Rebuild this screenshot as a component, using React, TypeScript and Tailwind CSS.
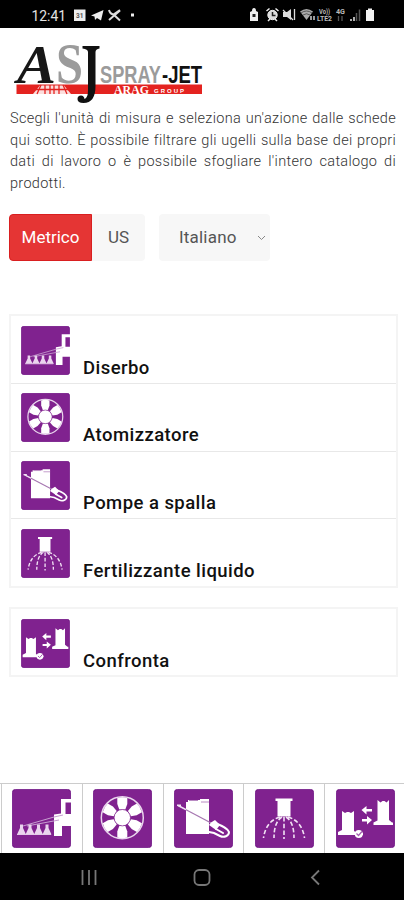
import React from 'react';

type IconName = 'weeding' | 'fan' | 'knapsack' | 'fertilizer' | 'compare';

function ToolIcon({ name, className }: { name: IconName; className: string }) {
  return (
    <svg className={`block shrink-0 ${className}`} viewBox="0 0 59 59" fill="none">
      <rect x="0.4" y="0.4" width="58.2" height="58.2" rx="3" fill="#80228f" stroke="#6a0d80" strokeWidth="0.8" />
      {name === 'weeding' && (
        <>
          <path d="M49 10h10v3.500h-5.500V25H59v12H50v10h-8V25.500l7-1z" fill="#fff" />
          <path d="M11 37l31-9 9-2M15 37l32-6" stroke="#c79fd0" strokeWidth="1" />
          {[9.5, 18, 26.5, 35].map((x) => (
            <path key={x} transform={`translate(${x} 0)`} d="M-1.500 35.500h3v3.500L4.500 45.500h-9l3-6.500z" fill="#ead5ee" />
          ))}
          <path d="M5 45.500h34" stroke="#e4cbe9" />
        </>
      )}
      {name === 'fan' && (
        <>
          <circle cx="29.300" cy="28.700" r="21" stroke="#e9d6ed" strokeWidth="1.500" />
          {[0, 60, 120, 180, 240, 300].map((angle) => (
            <path
              key={angle}
              transform={`rotate(${angle} 29.3 28.7)`}
              d="M24.300 9q5-1.500 10 0v6l-2 5.500h-6l-2-5.500z"
              fill="#fff"
            />
          ))}
          <circle cx="29.300" cy="28.700" r="8.200" fill="#fff" stroke="#80228f" strokeWidth="0.700" />
        </>
      )}
      {name === 'knapsack' && (
        <>
          <path d="M12 13h2v-2h12v-1h9v35H12z" fill="#fff" />
          <path d="M15 11.500h9M27 13h8" stroke="#b98ac3" strokeWidth="1" />
          <path d="M4 16.500L39 35" stroke="#a677b1" strokeWidth="1.300" />
          <path d="M3 16.300h4M4 16.500L12 20.600" stroke="#f1e2f4" strokeWidth="1.500" />
          <path d="M37 33.500l4-2.500 5 5-4 5-7-5z" fill="#fff" />
          <path d="M41 34q13 5 14 9c0 4-5 6-9 4l-6-3-5-1M42 40l7 4" stroke="#fff" strokeWidth="2" strokeLinecap="round" />
        </>
      )}
      {name === 'fertilizer' && (
        <>
          <path d="M20.500 9.500H37.500V12H35.500V27.500H22.500V12H20.500z" fill="#fff" />
          <path
            d="M25 28Q11 32 8.500 49M27 28Q19 33 19 49M29 28V50M31 28Q39 33 39 49M33 28Q47 32 49.500 49"
            stroke="#f1e2f4"
            strokeWidth="1.600"
            strokeDasharray="4.500 2.200"
          />
        </>
      )}
      {name === 'compare' && (
        <>
          <path d="M6 22l3 2 2-1h2l2 1 3-2v20l3 2h6v2H2v-3l4-2z" fill="#fff" />
          <circle cx="22.800" cy="45" r="4" fill="#fff" />
          <path d="M20.500 44.500l2 2 3.500-4" stroke="#a45eb0" strokeWidth="1.200" />
          <path d="M41.500 11l3 2.500 2-1.500h2l2 1.500 2.500-2.500v20l3 2.500h1V36H37.500v-2.500l4-2z" fill="#fff" />
          <path d="M25.500 21l5-4v3H36v2.500h-5.500v3zM36 31l-5-4v3h-5v2.500h5v3z" fill="#fff" />
        </>
      )}
    </svg>
  );
}

const sections: { icon: IconName; label: string }[] = [
  { icon: 'weeding', label: 'Diserbo' },
  { icon: 'fan', label: 'Atomizzatore' },
  { icon: 'knapsack', label: 'Pompe a spalla' },
  { icon: 'fertilizer', label: 'Fertilizzante liquido' },
];

const tabs: IconName[] = ['weeding', 'fan', 'knapsack', 'fertilizer', 'compare'];

function StatusBar() {
  return (
    <div className="h-[28px] bg-black">
      <svg className="block" width="404" height="28" viewBox="0 0 404 28" fill="none">
        <text x="31.500" y="20.500" fill="#e4e4e4" fontFamily="Roboto, sans-serif" fontSize="15.500" textLength="34.500" lengthAdjust="spacingAndGlyphs">12:41</text>
        <path d="M74 9.500h11.500v11.500H74z" fill="#eee" />
        <text x="76" y="18" fill="#555" fontFamily="Roboto, sans-serif" fontSize="6.500" fontWeight="700">31</text>
        <path d="M91 15.500l12.500-5.500-2.500 10.500-4-2.500-2 2-.5-3.500z" fill="#eee" />
        <path d="M109 10q1 4 4.500 4.500L120 10M109 20l11-9.500M113 14l7 6.500" stroke="#ddd" strokeWidth="2" />
        <rect x="131" y="13.500" width="3" height="3" fill="#eee" />
        <path d="M252 12l2-1q0-3 2-3t2 3l2 1v9h-8z" transform="translate(-2 0)" fill="#eee" />
        <path d="M252.500 14h3v3h-3z" fill="#222" />
        <circle cx="272.500" cy="15" r="4.700" fill="#ddd" stroke="#eee" />
        <path d="M266.500 11l3-2.500M278.500 11l-3-2.500M268 21l2-2M277 21l-2-2" stroke="#eee" strokeWidth="1.500" />
        <path d="M272.500 12v3.500h3" stroke="#222" strokeWidth="1.500" />
        <path d="M283 12h4l4-3v11l-4-3h-4z" fill="#ddd" />
        <path d="M283 10l10 10M294.500 9v11" stroke="#ddd" strokeWidth="1.300" />
        <path d="M300 11.500q6.500-5 13 0L306.500 20z" fill="#aaa" />
        <path d="M301 13q5.500-4 11 0M303 15q3.500-2.500 7 0" stroke="#333" strokeWidth="0.700" />
        <path d="M311 20v-4M314 16v4" stroke="#ddd" strokeWidth="1.400" />
        <g fill="#bbb" fontFamily="Roboto, sans-serif" fontWeight="700">
          <text x="319" y="14" fontSize="6.500" textLength="11" lengthAdjust="spacingAndGlyphs">Vo))</text>
          <text x="317" y="21" fontSize="7" textLength="15" lengthAdjust="spacingAndGlyphs">LTE2</text>
          <text x="336" y="14" fontSize="6.500" textLength="9" lengthAdjust="spacingAndGlyphs">4G</text>
        </g>
        <path d="M338.500 16v5M342 16v5" stroke="#555" strokeWidth="1.300" />
        <path d="M351 21v-2M354 21v-4" stroke="#ddd" strokeWidth="1.600" />
        <path d="M356.500 21v-8M359.500 21V9.500" stroke="#555" strokeWidth="1.500" />
        <path d="M366 10h2V8.500h4V10h2v11h-8z" fill="#f2f2f2" />
      </svg>
    </div>
  );
}

function Logo() {
  return (
    <svg className="ml-3 mt-1 block overflow-visible" width="194" height="73" viewBox="12 32 194 73">
      <rect x="16.500" y="84.500" width="185.500" height="9.500" fill="#e42320" />
      <text x="56" y="83" fill="#9b9b9b" fontFamily="Liberation Serif, serif" fontWeight="700" fontSize="57" textLength="27" lengthAdjust="spacingAndGlyphs">S</text>
      <text x="17" y="83" fill="#171717" fontFamily="Liberation Serif, serif" fontStyle="italic" fontWeight="700" fontSize="55" textLength="39" lengthAdjust="spacingAndGlyphs">A</text>
      <path d="M82.500 46h17v2.500q-4 .5-4 3.500v34q0 17-12 17-6 0-6-4 0-3.500 3.500-3.500 3 0 3.500 3.500 3.500-1 3.500-9V52q0-3-5.500-3.500z" fill="#111" />
      <path d="M33 94l7-8.500h24l7 8.500z" fill="#fff" opacity="0.850" />
      <path d="M41 85l-4 9M45 85v9M50 85v9M54 85v9M59 85v9M63 85l4 9M36 89.500h32" stroke="#e42320" strokeWidth="1.300" />
      <g fontFamily="Liberation Sans, sans-serif" fontWeight="700" fontSize="23">
        <text x="100" y="82.500" fill="#9b9b9b" textLength="61" lengthAdjust="spacingAndGlyphs">SPRAY</text>
        <text x="162" y="82.500" fill="#111" textLength="40" lengthAdjust="spacingAndGlyphs">-JET</text>
      </g>
      <text x="114" y="93.500" fill="#fff" fontFamily="Liberation Serif, serif" fontWeight="700" fontSize="12" textLength="35" lengthAdjust="spacingAndGlyphs">ARAG</text>
      <text x="154" y="93" fill="#fff" fontFamily="Liberation Sans, sans-serif" fontWeight="700" fontSize="6" textLength="30">GROUP</text>
    </svg>
  );
}

function SectionRow({ icon, label }: { icon: IconName; label: string }) {
  return (
    <button className="flex h-[67.800px] w-full items-start border-b border-[#e8e8e8] pl-[10px] pt-[9.500px] text-left last:border-b-0">
      <ToolIcon name={icon} className="h-[49px] w-[49px]" />
      <span className="ml-[13px] mt-[30px] whitespace-nowrap text-[18.500px] font-medium leading-6 tracking-[0.450px] text-[#111]">{label}</span>
    </button>
  );
}

export default function App() {
  return (
    <div className="flex h-[900px] w-[404px] flex-col overflow-hidden bg-white font-[Roboto,sans-serif]">
      <StatusBar />

      <main className="flex-1">
        <Logo />
        <p className="ml-[10px] mt-[3px] w-[386px] text-justify text-[14.500px] font-light leading-[21.500px] tracking-[0.300px] text-[#333]">
          Scegli l'unità di misura e seleziona un'azione dalle schede qui sotto. È possibile filtrare gli ugelli sulla base dei propri dati di lavoro o è possibile sfogliare l'intero catalogo di prodotti.
        </p>

        {/* Unit and language */}
        <div className="ml-[9px] mt-5 flex h-[47px] text-[17px] text-[#555]">
          <button className="w-[83px] rounded-l border border-[#d91f20] bg-[#e53534] text-white">Metrico</button>
          <button className="w-[53px] rounded-r bg-[#f7f7f7]">US</button>
          <button className="ml-[14px] flex w-[111px] items-center justify-between rounded bg-[#f7f7f7] pl-5 pr-1">
            <span className="tracking-[0.200px]">Italiano</span>
            <svg width="9" height="6" viewBox="0 0 9 6" fill="none">
              <path d="M1 1l3.500 3.500L8 1" stroke="#888" />
            </svg>
          </button>
        </div>

        <div className="ml-[9px] mt-[53px] h-[274px] w-[389px] border-2 border-[#f4f4f4]">
          {sections.map((section) => (
            <SectionRow key={section.label} icon={section.icon} label={section.label} />
          ))}
        </div>

        <div className="ml-[9px] mt-[19px] h-[70px] w-[389px] border-2 border-[#f4f4f4]">
          <SectionRow icon="compare" label="Confronta" />
        </div>
      </main>

      {/* Bottom tabs */}
      <nav className="flex h-[70px] border-t border-[#ccc] pl-px">
        {tabs.map((tab) => (
          <button key={tab} className="flex w-[80.800px] shrink-0 items-start justify-center border-l border-[#ccc] pt-[5px]">
            <ToolIcon name={tab} className="h-[59px] w-[59px]" />
          </button>
        ))}
      </nav>

      <div className="h-[47px] bg-black">
        <svg className="block" width="404" height="47" viewBox="0 0 404 47" fill="none" stroke="#777" strokeWidth="1.800">
          <path d="M82.500 17v15M89 17v15M95.500 17v15" />
          <rect x="194.500" y="17" width="15" height="15" rx="4.500" />
          <path d="M319 17.500l-7 7 7 7" />
        </svg>
      </div>
    </div>
  );
}
